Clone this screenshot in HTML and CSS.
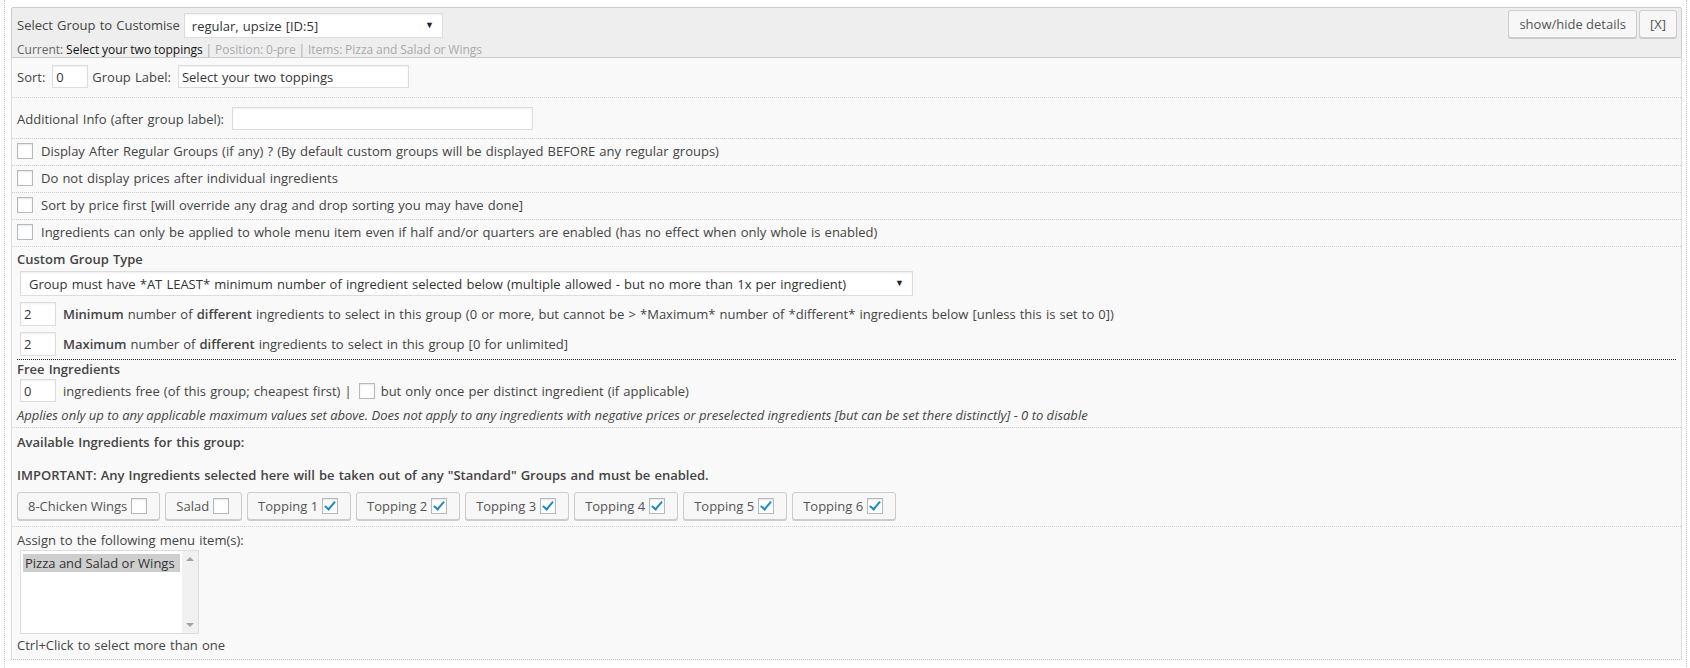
FILE: index.html
```html
<!DOCTYPE html>
<html lang="en">
<head>
    <meta charset="UTF-8">
    <meta name="viewport" content="width=device-width, initial-scale=1.0">
    <title>Custom Group</title>
    <link rel="stylesheet" href="styles.css">
</head>
<body>
    <div class="page">
        <div class="group">
            <div class="group__head">
                <div class="head__row">
                    <label class="head__label">Select Group to Customise</label>
                    <span class="sel sel--head">
                        <select>
                            <option>regular, upsize [ID:5]</option>
                        </select>
                    </span>
                    <span class="head__btns">
                        <button class="button">show/hide details</button>
                        <button class="button">[X]</button>
                    </span>
                </div>
                <div class="current"><span class="current__key">Current:</span> <span class="current__name">Select your two toppings</span> | Position: 0-pre | Items: Pizza and Salad or Wings</div>
            </div>

            <div class="group__body">
                <div class="row row--sort">
                    <span class="lbl">Sort:</span>
                    <input class="inp inp--sort" type="text" value="0">
                    <span class="lbl">Group Label:</span>
                    <input class="inp inp--label" type="text" value="Select your two toppings">
                </div>
                <div class="row row--info">
                    <span class="lbl">Additional Info (after group label):</span>
                    <input class="inp inp--info" type="text" value="">
                </div>
                <label class="row row--check"><input class="cb" type="checkbox"><span>Display After Regular Groups (if any) ? (By default custom groups will be displayed BEFORE any regular groups)</span></label>
                <label class="row row--check"><input class="cb" type="checkbox"><span>Do not display prices after individual ingredients</span></label>
                <label class="row row--check"><input class="cb" type="checkbox"><span>Sort by price first [will override any drag and drop sorting you may have done]</span></label>
                <label class="row row--check"><input class="cb" type="checkbox"><span>Ingredients can only be applied to whole menu item even if half and/or quarters are enabled (has no effect when only whole is enabled)</span></label>

                <div class="row row--type">
                    <div class="title">Custom Group Type</div>
                    <span class="sel sel--type">
                        <select>
                            <option>Group must have *AT LEAST* minimum number of ingredient selected below (multiple allowed - but no more than 1x per ingredient)</option>
                        </select>
                    </span>
                    <div class="num-row">
                        <input class="inp inp--num" type="text" value="2">
                        <span><b>Minimum</b> number of <b>different</b> ingredients to select in this group (0 or more, but cannot be &gt; *Maximum* number of *different* ingredients below [unless this is set to 0])</span>
                    </div>
                    <div class="num-row">
                        <input class="inp inp--num" type="text" value="2">
                        <span><b>Maximum</b> number of <b>different</b> ingredients to select in this group [0 for unlimited]</span>
                    </div>
                    <div class="split"></div>
                    <div class="title">Free Ingredients</div>
                    <div class="free-row">
                        <input class="inp inp--free" type="text" value="0">
                        <span>ingredients free (of this group; cheapest first) |</span>
                        <input class="cb cb--free" type="checkbox">
                        <span>but only once per distinct ingredient (if applicable)</span>
                    </div>
                    <div class="note">Applies only up to any applicable maximum values set above. Does not apply to any ingredients with negative prices or preselected ingredients [but can be set there distinctly] - 0 to disable</div>
                </div>

                <div class="row row--avail">
                    <div class="title">Available Ingredients for this group:</div>
                    <div class="title title--important">IMPORTANT: Any Ingredients selected here will be taken out of any "Standard" Groups and must be enabled.</div>
                    <div class="ingr">
                        <label class="button button--ingr">8-Chicken Wings<input class="cb" type="checkbox"></label>
                        <label class="button button--ingr">Salad<input class="cb" type="checkbox"></label>
                        <label class="button button--ingr">Topping 1<input class="cb" type="checkbox" checked></label>
                        <label class="button button--ingr">Topping 2<input class="cb" type="checkbox" checked></label>
                        <label class="button button--ingr">Topping 3<input class="cb" type="checkbox" checked></label>
                        <label class="button button--ingr">Topping 4<input class="cb" type="checkbox" checked></label>
                        <label class="button button--ingr">Topping 5<input class="cb" type="checkbox" checked></label>
                        <label class="button button--ingr">Topping 6<input class="cb" type="checkbox" checked></label>
                    </div>
                </div>

                <div class="row row--assign">
                    <div>Assign to the following menu item(s):</div>
                    <div class="items">
                        <div class="items__list">
                            <div class="items__opt items__opt--on">Pizza and Salad or Wings</div>
                        </div>
                        <div class="items__bar">
                            <span class="items__arrow items__arrow--up"></span>
                            <span class="items__arrow items__arrow--down"></span>
                        </div>
                    </div>
                    <div class="hint">Ctrl+Click to select more than one</div>
                </div>
            </div>
        </div>
    </div>
</body>
</html>
```

FILE: styles.css
```css
body {
    margin: 0;
    background: #fff;
    font-family: "Open Sans", "Liberation Sans", sans-serif;
    font-size: 13px;
    word-spacing: 0.75px;
    color: #444;
}
.page {
    box-sizing: border-box;
    min-height: 668px;
    margin: 0 3px 0 4px;
    padding: 7px 4px 0 6px;
    border-left: 1px dotted #c8c8c8;
    border-right: 1px dotted #c8c8c8;
}

/* head */
.group__head {
    padding: 2px 4px 1px 5px;
    border: 1px solid #ccc;
    border-radius: 2px 2px 0 0;
    background: #eee;
}
.head__row {
    display: flex;
    align-items: flex-end;
    height: 28px;
}
.head__label {
    align-self: center;
    padding-top: 2px;
    color: #444;
}
.head__btns {
    display: flex;
    gap: 2px;
    margin-left: auto;
}
.current {
    margin-top: 5px;
    font-size: 12px;
    line-height: 13px;
    word-spacing: -0.3px;
    color: #aaa;
}
.current__key {
    color: #666;
}
.current__name {
    color: #111;
}

/* selects */
.sel {
    position: relative;
    display: inline-block;
}
.sel select {
    box-sizing: border-box;
    width: 100%;
    height: 25px;
    padding: 0 20px 0 7px;
    border: 1px solid #ddd;
    border-radius: 0;
    background: #fff;
    box-shadow: inset 0 1px 2px rgba(0, 0, 0, .07);
    font-family: inherit;
    font-size: 13px;
    word-spacing: 0.75px;
    color: #333;
    -webkit-appearance: none;
    appearance: none;
}
.sel::after {
    content: "\25BC";
    position: absolute;
    top: 7px;
    right: 9px;
    font-size: 9px;
    line-height: 10px;
    color: #222;
    pointer-events: none;
}
.sel--head {
    width: 259px;
    margin-left: 4px;
}
.sel--type {
    width: 893px;
    margin: 3px 0 0 3px;
}
.sel--type select {
    padding-left: 8px;
}

/* buttons */
.button {
    box-sizing: border-box;
    display: inline-flex;
    align-items: center;
    height: 28px;
    margin: 0;
    padding: 0 10px 1px;
    border: 1px solid #ccc;
    border-radius: 3px;
    background: #f7f7f7;
    box-shadow: 0 1px 0 #ccc;
    font-family: inherit;
    font-size: 13px;
    color: #555;
    cursor: pointer;
}

/* body */
.group__body {
    border-left: 1px solid #ddd;
    border-right: 1px solid #ddd;
    border-bottom: 1px dotted #bbb;
    background: #f9f9f9;
}
.row {
    padding: 0 5px;
    border-bottom: 1px dotted #ccc;
}
.row:last-child {
    border-bottom: 0;
}
.row--sort,
.row--info {
    display: flex;
    align-items: center;
}
.row--sort {
    padding-top: 7px;
    padding-bottom: 9px;
}
.row--info {
    padding-top: 9px;
    padding-bottom: 8px;
}
.lbl {
    margin-right: 7px;
}
.inp + .lbl {
    margin-left: 4px;
}
.inp {
    box-sizing: border-box;
    height: 23px;
    margin: 0;
    padding: 0 3px;
    border: 1px solid #ddd;
    background: #fff;
    box-shadow: inset 0 1px 2px rgba(0, 0, 0, .07);
    font-family: inherit;
    font-size: 13px;
    word-spacing: 0.75px;
    color: #333;
    outline: none;
}
.inp--sort {
    width: 36px;
}
.inp--label {
    width: 231px;
}
.inp--info {
    width: 301px;
    margin-left: 1px;
}
.inp--num {
    width: 36px;
    height: 24px;
}
.inp--free {
    width: 36px;
}

/* checkboxes */
.cb {
    box-sizing: border-box;
    display: inline-grid;
    place-content: center;
    flex: 0 0 16px;
    width: 16px;
    height: 16px;
    margin: 0;
    border: 1px solid #b4b9be;
    background: #fff;
    box-shadow: inset 0 1px 2px rgba(0, 0, 0, .1);
    -webkit-appearance: none;
    appearance: none;
}
.cb:checked::before {
    content: "";
    width: 4px;
    height: 9px;
    margin-top: -3px;
    border-right: 2.5px solid #1e8cbe;
    border-bottom: 2.5px solid #1e8cbe;
    transform: rotate(40deg);
}
.row--check {
    display: flex;
    align-items: center;
    padding-top: 4px;
    padding-bottom: 6px;
    line-height: 16px;
}
.row--check:nth-of-type(6) {
    padding-bottom: 7px;
}
.row--check .cb {
    margin-right: 8px;
}

/* custom group type */
.row--type {
    padding-top: 3px;
    padding-bottom: 3px;
}
.title {
    font-weight: 600;
    line-height: 18px;
}
.num-row {
    display: flex;
    align-items: center;
    margin: 6px 0 0 3px;
}
.num-row .inp {
    margin-right: 7px;
}
b {
    font-weight: 600;
}
.split {
    margin-top: 3px;
    border-top: 1px dotted #222;
}
.free-row {
    display: flex;
    align-items: center;
    margin: 1px 0 0 3px;
}
.free-row .inp {
    margin-right: 7px;
}
.cb--free {
    margin: 0 6px 0 7px;
}
.note {
    margin-top: 4px;
    font-style: italic;
    line-height: 18px;
    word-spacing: 0;
}

/* ingredients */
.row--avail {
    padding-top: 5px;
    padding-bottom: 6px;
}
.title--important {
    margin-top: 15px;
}
.ingr {
    display: flex;
    gap: 5px;
    margin-top: 8px;
}
.button--ingr {
    padding: 0 9px 1px 10px;
    word-spacing: 0;
}
.button--ingr .cb {
    margin: 0 3px 0 4px;
}

/* assign */
.row--assign {
    padding-top: 4px;
    padding-bottom: 5px;
    line-height: 18px;
}
.items {
    box-sizing: border-box;
    display: flex;
    width: 179px;
    height: 84px;
    margin: 1px 0 0 3px;
    border: 1px solid #ddd;
    background: #fff;
}
.items__list {
    flex: 1;
    padding: 3px 2px;
}
.items__opt {
    padding: 0 2px;
    line-height: 18px;
    word-spacing: 0;
    color: #333;
}
.items__opt--on {
    background: #cecece;
}
.items__bar {
    display: flex;
    flex-direction: column;
    justify-content: space-between;
    align-items: center;
    width: 16px;
    padding: 6px 0;
    background: #f1f1f1;
}
.items__arrow {
    width: 0;
    height: 0;
    border-left: 4px solid transparent;
    border-right: 4px solid transparent;
}
.items__arrow--up {
    border-bottom: 4px solid #a3a3a3;
}
.items__arrow--down {
    border-top: 4px solid #a3a3a3;
}
.hint {
    margin-top: 2px;
}
```
